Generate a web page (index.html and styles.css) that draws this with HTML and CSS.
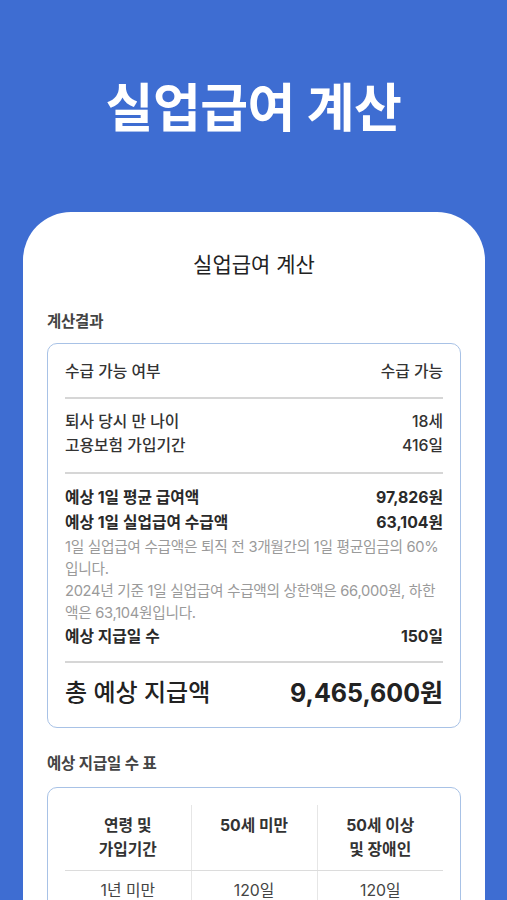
FILE: index.html
```html
<!DOCTYPE html>
<html lang="ko">
<head>
<meta charset="UTF-8" />
<meta name="viewport" content="width=device-width, initial-scale=1" />
<title>실업급여 계산</title>
<link rel="stylesheet" href="styles.css">
</head>
<body>
<div class="hero">실업급여 계산</div>

<div class="phone">
  <div class="phone-title">실업급여 계산</div>

  <!-- 계산 결과 -->
  <div class="block-label">계산결과</div>
  <div class="box result">
    <div class="row first"><span>수급 가능 여부</span><span>수급 가능</span></div>
    <div class="divider"></div>
    <div class="row"><span>퇴사 당시 만 나이</span><span>18세</span></div>
    <div class="row"><span>고용보험 가입기간</span><span>416일</span></div>
    <div class="divider"></div>
    <div class="row strong"><span>예상 1일 평균 급여액</span><span>97,826원</span></div>
    <div class="row strong"><span>예상 1일 실업급여 수급액</span><span>63,104원</span></div>
    <p class="note">1일 실업급여 수급액은 퇴직 전 3개월간의 1일 평균임금의 60%입니다.</p>
    <p class="note">2024년 기준 1일 실업급여 수급액의 상한액은 66,000원, 하한액은 63,104원입니다.</p>
    <div class="row strong"><span>예상 지급일 수</span><span>150일</span></div>
    <div class="divider"></div>
    <div class="row total"><span>총 예상 지급액</span><span class="total-sum">9,465,600원</span></div>
  </div>

  <!-- 지급일 수 표 -->
  <div class="block-label second">예상 지급일 수 표</div>
  <div class="box days">
    <table class="days-table">
      <tr>
        <th>연령 및<br>가입기간</th>
        <th>50세 미만</th>
        <th>50세 이상<br>및 장애인</th>
      </tr>
      <tr>
        <td>1년 미만</td>
        <td>120일</td>
        <td>120일</td>
      </tr>
      <tr>
        <td>1년 이상<br>3년 미만</td>
        <td>150일</td>
        <td>180일</td>
      </tr>
    </table>
  </div>
</div>
</body>
</html>
```

FILE: styles.css
```css
/* 기본 */
html, body {
  margin: 0; padding: 0;
  height: 100%;
}
body {
  background: #3e6dd2;
  font-family: 'Inter', 'Noto Sans CJK KR', sans-serif;
  color: #333;
  overflow: hidden;
}

/* 상단 큰 제목 */
.hero {
  height: 208px;
  padding-bottom: 4px;
  display: flex;
  align-items: center;
  justify-content: center;
  color: #fff;
  font-size: 52px;
  font-weight: 700;
  letter-spacing: -0.5px;
}

/* 폰 화면 카드 */
.phone {
  margin: 0 22px 0 23px;
  background: #fff;
  border-radius: 48px 48px 0 0;
  padding: 40px 24px;
  min-height: 700px;
  box-sizing: border-box;
}
.phone-title {
  text-align: center;
  font-size: 21px;
  line-height: 26px;
  color: #222;
}
.block-label {
  margin-top: 34px;
  font-size: 15.5px;
  line-height: 20px;
  font-weight: 600;
  color: #444;
  letter-spacing: -0.2px;
}
.block-label.second {
  margin-top: 26px;
}
.box {
  margin-top: 11px;
  border: 1px solid #a8c2e6;
  border-radius: 10px;
  padding: 0 17px;
}
.block-label.second + .box {
  margin-top: 13px;
}

/* 결과 박스 */
.result {
  padding-top: 16px;
  padding-bottom: 17px;
}
.row {
  display: flex;
  justify-content: space-between;
  align-items: center;
  font-size: 15.8px;
  line-height: 24.5px;
  font-weight: 500;
  color: #333;
}
.row.strong {
  font-weight: 700;
  line-height: 25px;
  color: #2a2a2a;
}
.divider {
  height: 2px;
  background: #d6d6d6;
  margin: 12px 0 11px;
}
.row + .row + .divider {
  margin-top: 13px;
}
.note {
  margin: 0;
  font-size: 14.7px;
  line-height: 22px;
  color: #9a9a9a;
  letter-spacing: -0.3px;
}
.result .row.strong + .note {
  margin-top: 1px;
}
.row.total {
  font-size: 24px;
  line-height: 34px;
  font-weight: 500;
  color: #222;
  padding-top: 2px;
}
.total-sum {
  font-size: 25px;
  font-weight: 700;
}

/* 지급일 수 표 */
.days {
  padding-top: 17px;
  padding-bottom: 17px;
}
.days-table {
  width: 100%;
  border-collapse: collapse;
  table-layout: fixed;
}
.days-table th,
.days-table td {
  text-align: center;
  font-size: 15.8px;
  line-height: 24px;
  border-left: 1px solid #e6e6e6;
}
.days-table th:first-child,
.days-table td:first-child {
  border-left: none;
}
.days-table th {
  font-weight: 700;
  color: #333;
  vertical-align: top;
  padding: 9px 4px 8px;
  border-bottom: 1px solid #dcdcdc;
}
.days-table td {
  font-weight: 400;
  color: #444;
  padding: 8px 4px;
}
```
